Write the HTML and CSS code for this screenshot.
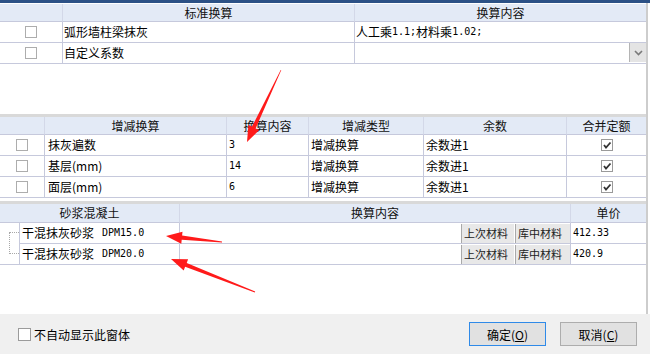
FILE: index.html
```html
<!DOCTYPE html>
<html>
<head>
    <meta charset="utf-8">
    <title>换算信息</title>
    <link rel="stylesheet" href="styles.css">
</head>
<body>
    <div class="title-strip"></div>

    <div class="panel">
        <!-- 标准换算 -->
        <div class="section section-std">
            <div class="grid grid-std">
                <div class="cell head"></div>
                <div class="cell head">标准换算</div>
                <div class="cell head last">换算内容</div>

                <div class="cell center"><span class="check"></span></div>
                <div class="cell pad1">弧形墙柱梁抹灰</div>
                <div class="cell pad1 last">人工乘<span class="num">1.1;</span>材料乘<span class="num">1.02;</span></div>

                <div class="cell center"><span class="check"></span></div>
                <div class="cell pad1">自定义系数</div>
                <div class="cell last combo">
                    <span class="combo-btn">
                        <svg width="9" height="6" viewBox="0 0 9 6"><path d="M1 1 L4.5 4.5 L8 1" fill="none" stroke="#7a7a7a" stroke-width="1.6"/></svg>
                    </span>
                </div>
            </div>
        </div>

        <div class="divider"></div>

        <!-- 增减换算 -->
        <div class="section section-adj">
            <div class="grid grid-adj">
                <div class="cell head"></div>
                <div class="cell head">增减换算</div>
                <div class="cell head">换算内容</div>
                <div class="cell head">增减类型</div>
                <div class="cell head">余数</div>
                <div class="cell head last">合并定额</div>

                <div class="cell center"><span class="check"></span></div>
                <div class="cell pad3">抹灰遍数</div>
                <div class="cell"><span class="num">3</span></div>
                <div class="cell">增减换算</div>
                <div class="cell">余数进1</div>
                <div class="cell center last"><span class="check on"><svg width="10" height="10" viewBox="0 0 10 10"><path d="M2 5 L4 7.5 L8.5 2.5" fill="none" stroke="#333" stroke-width="1.8"/></svg></span></div>

                <div class="cell center"><span class="check"></span></div>
                <div class="cell pad3">基层(mm)</div>
                <div class="cell"><span class="num">14</span></div>
                <div class="cell">增减换算</div>
                <div class="cell">余数进1</div>
                <div class="cell center last"><span class="check on"><svg width="10" height="10" viewBox="0 0 10 10"><path d="M2 5 L4 7.5 L8.5 2.5" fill="none" stroke="#333" stroke-width="1.8"/></svg></span></div>

                <div class="cell center"><span class="check"></span></div>
                <div class="cell pad3">面层(mm)</div>
                <div class="cell"><span class="num">6</span></div>
                <div class="cell">增减换算</div>
                <div class="cell">余数进1</div>
                <div class="cell center last"><span class="check on"><svg width="10" height="10" viewBox="0 0 10 10"><path d="M2 5 L4 7.5 L8.5 2.5" fill="none" stroke="#333" stroke-width="1.8"/></svg></span></div>
            </div>
        </div>

        <div class="divider"></div>

        <!-- 砂浆混凝土 -->
        <div class="section section-mix">
            <div class="grid grid-mix">
                <div class="cell head span2">砂浆混凝土</div>
                <div class="cell head">换算内容</div>
                <div class="cell head last">单价</div>

                <div class="cell tree"><div class="tree-line"></div></div>
                <div class="cell pad2">干混抹灰砂浆 <span class="num spec">DPM15.0</span></div>
                <div class="cell actions">
                    <span class="mat-btn">上次材料</span>
                    <span class="mat-btn">库中材料</span>
                </div>
                <div class="cell last"><span class="num">412.33</span></div>

                <div class="cell pad2">干混抹灰砂浆 <span class="num spec">DPM20.0</span></div>
                <div class="cell actions">
                    <span class="mat-btn">上次材料</span>
                    <span class="mat-btn">库中材料</span>
                </div>
                <div class="cell last"><span class="num">420.9</span></div>
            </div>
        </div>
    </div>

    <div class="footer">
        <label class="opt"><span class="box"></span>不自动显示此窗体</label>
        <button class="btn primary">确定(<u>O</u>)</button>
        <button class="btn">取消(<u>C</u>)</button>
    </div>

    <!-- red annotation arrows drawn over the dialog -->
    <svg class="marks" width="650" height="354" viewBox="0 0 650 354">
        <polygon points="281.3,70.1 255.6,128.4 259.2,130.1 247,142 248.4,124.9 252,126.6 280.7,69.9" fill="#ff1a1a"/>
        <polygon points="222,241.6 182.1,235.6 182.5,231.7 166,236 181.3,243.7 181.7,239.8 222,242.4" fill="#ff1a1a"/>
        <polygon points="255.2,291.6 186.7,263 188.1,259.3 171,259 183.7,270.5 185.1,266.8 254.8,292.4" fill="#ff1a1a"/>
    </svg>
</body>
</html>
```

FILE: styles.css
```css
* {
    margin: 0;
    padding: 0;
    box-sizing: border-box;
}

body {
    width: 650px;
    height: 354px;
    overflow: hidden;
    position: relative;
    background-color: #ffffff;
    font-family: "Noto Sans CJK SC", sans-serif;
    font-size: 12px;
    color: #000;
}

.title-strip {
    height: 3px;
    background-color: #2c5186;
}

.panel {
    height: 311px;
    margin-right: 2px;
    border-right: 2px solid #cdcdcd;
    display: flex;
    flex-direction: column;
}

.section-std {
    height: 111px;
    padding-top: 1px;
}

.section-adj {
    height: 84px;
}

.section-mix {
    flex: 1;
}

.divider {
    height: 3px;
    background-color: #d9d9d9;
}

/* grids */
.grid {
    display: grid;
}

.grid-std {
    grid-template-columns: 63px 292px 291px;
    grid-template-rows: 18px 21px 21px;
}

.grid-adj {
    grid-template-columns: 45px 182px 82px 115px 143px 79px;
    grid-template-rows: 18px 21px 21px 21px;
}

.grid-mix {
    grid-template-columns: 20px 160px 391px 75px;
    grid-template-rows: 19px 21px 21px;
}

.cell {
    border-right: 1px solid #c6c9dc;
    border-bottom: 1px solid #c6c9dc;
    padding-left: 2px;
    white-space: nowrap;
    overflow: hidden;
    display: flex;
    align-items: center;
    line-height: 16px;
}

.cell.last {
    border-right: none;
}

.pad1 { padding-left: 1px; }
.pad2 { padding-left: 2px; }
.pad3 { padding-left: 3px; }

.head {
    background-color: #e3eaf6;
    border-right-color: #d3d8e8;
    justify-content: center;
    padding-left: 0;
    color: #111;
}

.span2 {
    grid-column: span 2;
}

.center {
    justify-content: center;
    padding-left: 0;
}

.num {
    font-family: "DejaVu Sans Mono", monospace;
    font-size: 10px;
}

.spec {
    margin-left: 8px;
}

.check {
    width: 12px;
    height: 12px;
    border: 1px solid #adadad;
    background-color: #fff;
    display: flex;
    align-items: center;
    justify-content: center;
}

.check.on {
    border-color: #9a9a9a;
}

.combo {
    justify-content: flex-end;
    padding-left: 0;
}

.combo-btn {
    width: 17px;
    height: 19px;
    margin-bottom: 1px;
    background-color: #e4e4e4;
    border-left: 1px solid #b4b4b4;
    display: flex;
    align-items: center;
    justify-content: center;
}

/* tree connector */
.tree {
    grid-row: span 2;
    display: block;
    padding-left: 0;
}

.tree-line {
    width: 10px;
    height: 22px;
    margin: 9px 0 0 9px;
    border-left: 1px dotted #a8a8a8;
    border-top: 1px dotted #a8a8a8;
    border-bottom: 1px dotted #a8a8a8;
}

.actions {
    justify-content: flex-end;
    gap: 1px;
    padding-left: 0;
}

.mat-btn {
    height: 19px;
    padding: 0 2px;
    background-color: #e8e8e8;
    border-left: 1px solid #a9a9a9;
    font-size: 11px;
    line-height: 19px;
    color: #222;
}

.mat-btn:first-child {
    width: 53px;
}

.mat-btn:last-child {
    width: 55px;
}

/* footer */
.footer {
    height: 40px;
    background-color: #f0f0f0;
    display: flex;
    align-items: center;
    padding: 0 13px 0 18px;
}

.opt {
    display: flex;
    align-items: center;
    gap: 3px;
    margin-right: auto;
    margin-top: 1px;
}

.opt .box {
    width: 13px;
    height: 13px;
    border: 1px solid #9b9b9b;
    background-color: #fff;
}

.btn {
    width: 77px;
    height: 24px;
    margin-left: 14px;
    background-color: #e1e1e1;
    border: 1px solid #adadad;
    font-family: "Noto Sans CJK SC", sans-serif;
    font-size: 12px;
    color: #000;
}

.btn.primary {
    border-color: #2f8ae8;
}

.btn u {
    text-decoration: underline;
}

.marks {
    position: absolute;
    top: 0;
    left: 0;
    pointer-events: none;
}
```
